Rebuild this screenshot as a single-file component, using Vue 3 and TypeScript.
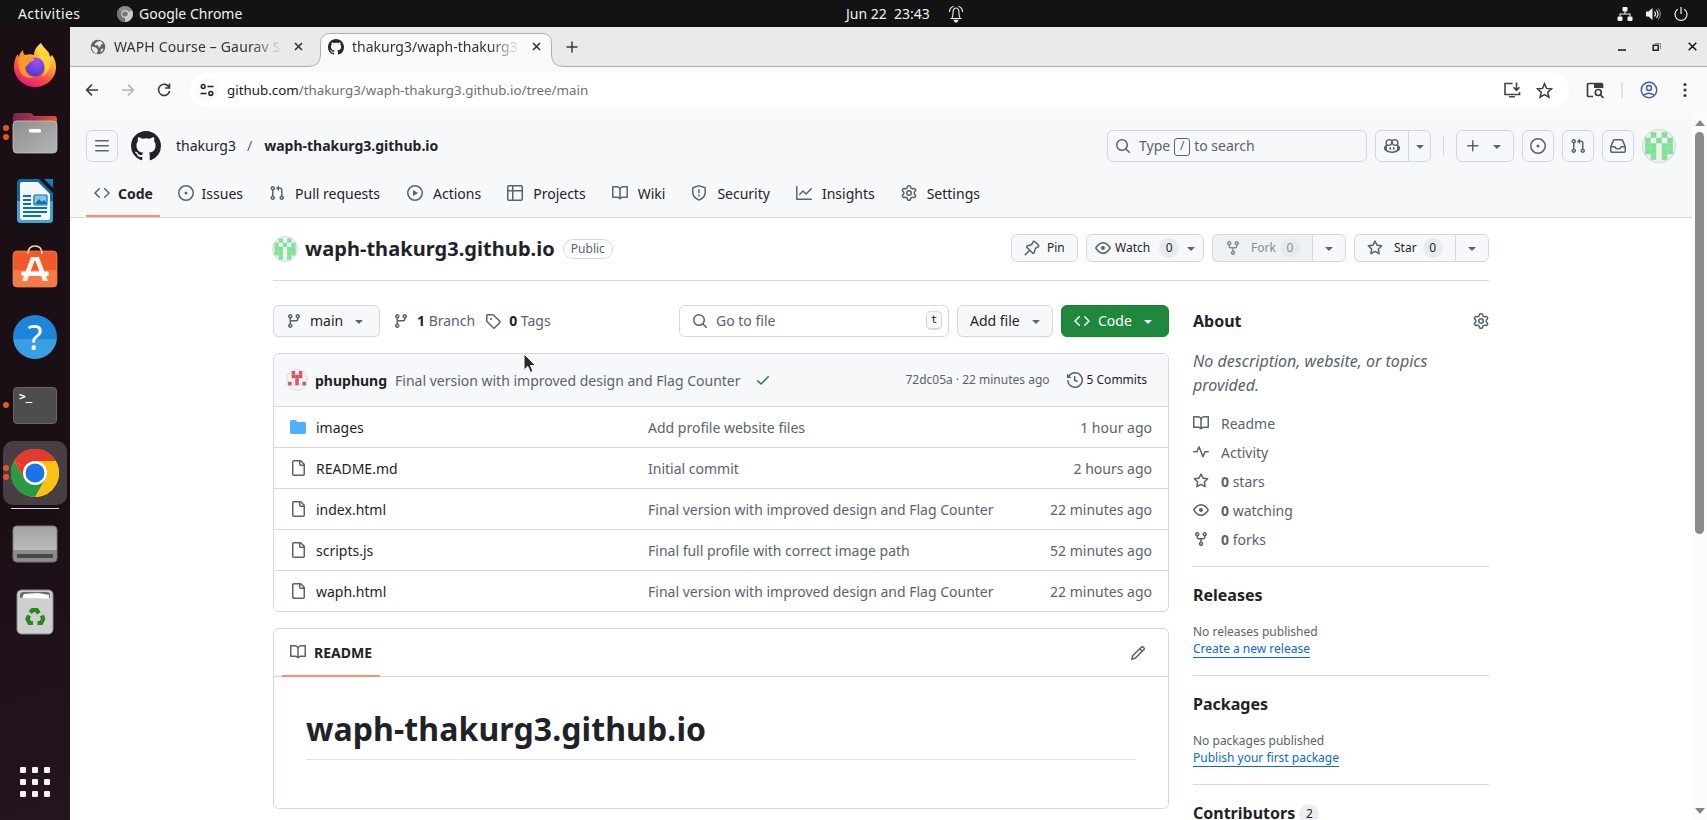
<script setup lang="ts">
import { h } from 'vue'

const paths: Record<string, string> = {
  code: 'm11.28 3.22 4.25 4.25a.75.75 0 0 1 0 1.06l-4.25 4.25a.749.749 0 0 1-1.275-.326.749.749 0 0 1 .215-.734L13.94 8l-3.72-3.72a.749.749 0 0 1 .326-1.275.749.749 0 0 1 .734.215Zm-6.56 0a.751.751 0 0 1 1.042.018.751.751 0 0 1 .018 1.042L2.06 8l3.72 3.72a.749.749 0 0 1-.326 1.275.749.749 0 0 1-.734-.215L.47 8.53a.75.75 0 0 1 0-1.06Z',
  issue: 'M8 9.5a1.5 1.5 0 1 0 0-3 1.5 1.5 0 0 0 0 3Z M8 0a8 8 0 1 1 0 16A8 8 0 0 1 8 0ZM1.5 8a6.5 6.5 0 1 0 13 0 6.5 6.5 0 0 0-13 0Z',
  pull: 'M1.5 3.25a2.25 2.25 0 1 1 3 2.122v5.256a2.251 2.251 0 1 1-1.5 0V5.372A2.25 2.25 0 0 1 1.5 3.25Zm5.677-.177L9.573.677A.25.25 0 0 1 10 .854V2.5h1A2.5 2.5 0 0 1 13.5 5v5.628a2.251 2.251 0 1 1-1.5 0V5a1 1 0 0 0-1-1h-1v1.646a.25.25 0 0 1-.427.177L7.177 3.427a.25.25 0 0 1 0-.354ZM3.75 2.5a.75.75 0 1 0 0 1.5.75.75 0 0 0 0-1.5Zm0 9.5a.75.75 0 1 0 0 1.5.75.75 0 0 0 0-1.5Zm8.25.75a.75.75 0 1 0 1.5 0 .75.75 0 0 0-1.5 0Z',
  play: 'M8 0a8 8 0 1 1 0 16A8 8 0 0 1 8 0ZM1.5 8a6.5 6.5 0 1 0 13 0 6.5 6.5 0 0 0-13 0Zm4.879-2.773 4.264 2.559a.25.25 0 0 1 0 .428l-4.264 2.559A.25.25 0 0 1 6 10.559V5.442a.25.25 0 0 1 .379-.215Z',
  table: 'M0 1.75C0 .784.784 0 1.75 0h12.5C15.216 0 16 .784 16 1.75v12.5A1.75 1.75 0 0 1 14.25 16H1.75A1.75 1.75 0 0 1 0 14.25ZM6.5 6.5v8h7.75a.25.25 0 0 0 .25-.25V6.5Zm8-1.5V1.75a.25.25 0 0 0-.25-.25H6.5V5Zm-13 1.5v7.75c0 .138.112.25.25.25H5v-8ZM5 5V1.5H1.75a.25.25 0 0 0-.25.25V5Z',
  book: 'M0 1.75A.75.75 0 0 1 .75 1h4.253c1.227 0 2.317.59 3 1.501A3.743 3.743 0 0 1 11.006 1h4.245a.75.75 0 0 1 .75.75v10.5a.75.75 0 0 1-.75.75h-4.507a2.25 2.25 0 0 0-1.591.659l-.622.621a.75.75 0 0 1-1.06 0l-.622-.621A2.25 2.25 0 0 0 5.258 13H.75a.75.75 0 0 1-.75-.75Zm7.251 10.324.004-5.073-.002-2.253A2.25 2.25 0 0 0 5.003 2.5H1.5v9h3.757a3.75 3.75 0 0 1 1.994.574ZM8.755 4.75l-.004 7.322a3.752 3.752 0 0 1 1.992-.572H14.5v-9h-3.495a2.25 2.25 0 0 0-2.25 2.25Z',
  shield: 'M7.467.133a1.748 1.748 0 0 1 1.066 0l5.25 1.68A1.75 1.75 0 0 1 15 3.48V7c0 1.566-.32 3.182-1.303 4.682-.983 1.498-2.585 2.813-5.032 3.855a1.697 1.697 0 0 1-1.33 0c-2.447-1.042-4.049-2.357-5.032-3.855C1.32 10.182 1 8.566 1 7V3.48a1.75 1.75 0 0 1 1.217-1.667Zm.61 1.429a.25.25 0 0 0-.153 0l-5.25 1.68a.25.25 0 0 0-.174.238V7c0 1.358.275 2.666 1.057 3.86.784 1.194 2.121 2.34 4.366 3.297a.196.196 0 0 0 .154 0c2.245-.956 3.582-2.104 4.366-3.298C13.225 9.666 13.5 8.36 13.5 7V3.48a.251.251 0 0 0-.174-.237l-5.25-1.68ZM8.75 4.75v3a.75.75 0 0 1-1.5 0v-3a.75.75 0 0 1 1.5 0ZM9 10.5a1 1 0 1 1-2 0 1 1 0 0 1 2 0Z',
  graph: 'M1.5 1.75V13.5h13.75a.75.75 0 0 1 0 1.5H.75a.75.75 0 0 1-.75-.75V1.75a.75.75 0 0 1 1.5 0Zm14.28 2.53-5.25 5.25a.75.75 0 0 1-1.06 0L7 7.06 4.28 9.78a.751.751 0 0 1-1.042-.018.751.751 0 0 1-.018-1.042l3.25-3.25a.75.75 0 0 1 1.06 0L10 7.94l4.72-4.72a.751.751 0 0 1 1.042.018.751.751 0 0 1 .018 1.042Z',
  gear: 'M8 0a8.2 8.2 0 0 1 .701.031C9.444.095 9.99.645 10.16 1.29l.288 1.107c.018.066.079.158.212.224.231.114.454.243.668.386.123.082.233.09.299.071l1.103-.303c.644-.176 1.392.021 1.82.63.27.385.506.792.704 1.218.315.675.111 1.422-.364 1.891l-.814.806c-.049.048-.098.147-.088.294.016.257.016.515 0 .772-.01.147.038.246.088.294l.814.806c.475.469.679 1.216.364 1.891a7.977 7.977 0 0 1-.704 1.217c-.428.61-1.176.807-1.82.63l-1.102-.302c-.067-.019-.177-.011-.3.071a5.909 5.909 0 0 1-.668.386c-.133.066-.194.158-.211.224l-.29 1.106c-.168.646-.715 1.196-1.458 1.26a8.006 8.006 0 0 1-1.402 0c-.743-.064-1.289-.614-1.458-1.26l-.289-1.106c-.018-.066-.079-.158-.212-.224a5.738 5.738 0 0 1-.668-.386c-.123-.082-.233-.09-.299-.071l-1.103.303c-.644.176-1.392-.021-1.82-.63a8.12 8.12 0 0 1-.704-1.218c-.315-.675-.111-1.422.363-1.891l.815-.806c.05-.048.098-.147.088-.294a6.214 6.214 0 0 1 0-.772c.01-.147-.038-.246-.088-.294l-.815-.806C.635 6.045.431 5.298.746 4.623a7.92 7.92 0 0 1 .704-1.217c.428-.61 1.176-.807 1.82-.63l1.102.302c.067.019.177.011.3-.071.214-.143.437-.272.668-.386.133-.066.194-.158.211-.224l.29-1.106C6.009.645 6.556.095 7.299.03 7.53.01 7.764 0 8 0Zm-.571 1.525c-.036.003-.108.036-.137.146l-.289 1.105c-.147.561-.549.967-.998 1.189-.173.086-.34.183-.5.29-.417.278-.97.423-1.529.27l-1.103-.303c-.109-.03-.175.016-.195.045-.22.312-.412.644-.573.99-.014.031-.021.11.059.19l.815.806c.411.406.562.957.53 1.456a4.709 4.709 0 0 0 0 .582c.032.499-.119 1.05-.53 1.456l-.815.806c-.081.08-.073.159-.059.19.162.346.353.677.573.989.02.03.085.076.195.046l1.102-.303c.56-.153 1.113-.008 1.53.27.161.107.328.204.501.29.447.222.85.629.997 1.189l.289 1.105c.029.109.101.143.137.146a6.6 6.6 0 0 0 1.142 0c.036-.003.108-.036.137-.146l.289-1.105c.147-.561.549-.967.998-1.189.173-.086.34-.183.5-.29.417-.278.97-.423 1.529-.27l1.103.303c.109.029.175-.016.195-.045.22-.313.411-.644.573-.99.014-.031.021-.11-.059-.19l-.815-.806c-.411-.406-.562-.957-.53-1.456a4.709 4.709 0 0 0 0-.582c-.032-.499.119-1.05.53-1.456l.815-.806c.081-.08.073-.159.059-.19a6.464 6.464 0 0 0-.573-.989c-.02-.03-.085-.076-.195-.046l-1.102.303c-.56.153-1.113.008-1.53-.27a4.44 4.44 0 0 0-.501-.29c-.447-.222-.85-.629-.997-1.189l-.289-1.105c-.029-.11-.101-.143-.137-.146a6.6 6.6 0 0 0-1.142 0ZM11 8a3 3 0 1 1-6 0 3 3 0 0 1 6 0ZM9.5 8a1.5 1.5 0 1 0-3.001.001A1.5 1.5 0 0 0 9.5 8Z',
  github: 'M8 0c4.42 0 8 3.58 8 8a8.013 8.013 0 0 1-5.45 7.59c-.4.08-.55-.17-.55-.38 0-.27.01-1.13.01-2.2 0-.75-.25-1.23-.54-1.48 1.78-.2 3.65-.88 3.65-3.95 0-.88-.31-1.59-.82-2.15.08-.2.36-1.02-.08-2.12 0 0-.67-.22-2.2.82-.64-.18-1.32-.27-2-.27-.68 0-1.36.09-2 .27-1.53-1.03-2.2-.82-2.2-.82-.44 1.1-.16 1.92-.08 2.12-.51.56-.82 1.28-.82 2.15 0 3.06 1.86 3.75 3.64 3.95-.23.2-.44.55-.51 1.07-.46.21-1.61.55-2.33-.66-.15-.24-.6-.83-1.23-.82-.67.01-.27.38.01.53.34.19.73.9.82 1.13.16.45.68 1.31 2.69.94 0 .67.01 1.3.01 1.49 0 .21-.15.45-.55.38A7.995 7.995 0 0 1 0 8c0-4.42 3.58-8 8-8Z',
  search: 'M10.68 11.74a6 6 0 0 1-7.922-8.982 6 6 0 0 1 8.982 7.922l3.04 3.04a.749.749 0 0 1-.326 1.275.749.749 0 0 1-.734-.215ZM11.5 7a4.499 4.499 0 1 0-8.997 0A4.499 4.499 0 0 0 11.5 7Z',
  bars: 'M1 2.75A.75.75 0 0 1 1.75 2h12.5a.75.75 0 0 1 0 1.5H1.75A.75.75 0 0 1 1 2.75Zm0 5A.75.75 0 0 1 1.75 7h12.5a.75.75 0 0 1 0 1.5H1.75A.75.75 0 0 1 1 7.75ZM1.75 12h12.5a.75.75 0 0 1 0 1.5H1.75a.75.75 0 0 1 0-1.5Z',
  down: 'm4.427 7.427 3.396 3.396a.25.25 0 0 0 .354 0l3.396-3.396A.25.25 0 0 0 11.396 7H4.604a.25.25 0 0 0-.177.427Z',
  plus: 'M7.75 2a.75.75 0 0 1 .75.75V7h4.25a.75.75 0 0 1 0 1.5H8.5v4.25a.75.75 0 0 1-1.5 0V8.5H2.75a.75.75 0 0 1 0-1.5H7V2.75A.75.75 0 0 1 7.75 2Z',
  inbox: 'M2.8 2.06A1.75 1.75 0 0 1 4.41 1h7.18c.7 0 1.333.417 1.61 1.06l2.74 6.395c.04.093.06.194.06.295v4.5A1.75 1.75 0 0 1 14.25 15H1.75A1.75 1.75 0 0 1 0 13.25v-4.5c0-.101.02-.202.06-.295Zm1.61.44a.25.25 0 0 0-.23.152L1.887 8H4.75a.75.75 0 0 1 .6.3L6.625 10h2.75l1.275-1.7a.75.75 0 0 1 .6-.3h2.863L11.82 2.652a.25.25 0 0 0-.23-.152Zm10.09 7h-2.875l-1.275 1.7a.75.75 0 0 1-.6.3h-3.5a.75.75 0 0 1-.6-.3L4.375 9.5H1.5v3.75c0 .138.112.25.25.25h12.5a.25.25 0 0 0 .25-.25Z',
  copilot: 'M7.998 15.035c-4.562 0-7.873-2.914-7.998-3.749V9.338c.085-.628.677-1.686 1.588-2.065.013-.07.024-.143.036-.218.029-.183.06-.384.126-.612-.201-.508-.254-1.084-.254-1.656 0-.87.128-1.769.693-2.484.579-.733 1.494-1.124 2.724-1.261 1.206-.134 2.262.034 2.944.765.05.053.096.108.139.165.044-.057.094-.112.143-.165.682-.731 1.738-.899 2.944-.765 1.23.137 2.145.528 2.724 1.261.566.715.693 1.614.693 2.484 0 .572-.053 1.148-.254 1.656.066.228.098.429.126.612.012.076.024.148.037.218.924.385 1.522 1.471 1.591 2.095v1.872c0 .766-3.351 3.795-8.002 3.795Zm0-1.485c2.28 0 4.584-1.11 5.002-1.433V7.862l-.023-.116c-.49.21-1.075.291-1.727.291-1.146 0-2.059-.327-2.71-.991A3.222 3.222 0 0 1 8 6.303a3.24 3.24 0 0 1-.544.743c-.65.664-1.563.991-2.71.991-.652 0-1.236-.081-1.727-.291l-.023.116v4.255c.419.323 2.722 1.433 5.002 1.433ZM6.762 2.83c-.193-.206-.637-.413-1.682-.297-1.019.113-1.479.404-1.713.7-.247.312-.369.789-.369 1.554 0 .793.129 1.171.308 1.371.162.181.519.379 1.442.379.853 0 1.339-.235 1.638-.54.315-.322.527-.827.617-1.553.117-.935-.037-1.395-.241-1.614Zm4.155-.297c-1.044-.116-1.488.091-1.681.297-.204.219-.359.679-.242 1.614.091.726.303 1.231.618 1.553.299.305.784.54 1.638.54.922 0 1.28-.198 1.442-.379.179-.2.308-.578.308-1.371 0-.765-.123-1.242-.37-1.554-.233-.296-.693-.587-1.713-.7Z M6.25 9.037a.75.75 0 0 1 .75.75v1.501a.75.75 0 0 1-1.5 0V9.787a.75.75 0 0 1 .75-.75Zm4.25.75v1.501a.75.75 0 0 1-1.5 0V9.787a.75.75 0 0 1 1.5 0Z',
  pin: 'm11.294.984 3.722 3.722a1.75 1.75 0 0 1-.504 2.826l-1.327.613a3.089 3.089 0 0 0-1.707 2.084l-.584 2.454c-.317 1.332-1.972 1.8-2.94.832L5.75 11.311 1.78 15.28a.749.749 0 1 1-1.06-1.06l3.969-3.97-2.204-2.204c-.968-.968-.5-2.623.832-2.94l2.454-.584a3.08 3.08 0 0 0 2.084-1.707l.613-1.327a1.75 1.75 0 0 1 2.826-.504ZM6.283 9.723l2.732 2.731a.25.25 0 0 0 .42-.119l.584-2.454a4.586 4.586 0 0 1 2.537-3.098l1.328-.613a.25.25 0 0 0 .072-.404l-3.722-3.722a.25.25 0 0 0-.404.072l-.613 1.328a4.584 4.584 0 0 1-3.098 2.537l-2.454.584a.25.25 0 0 0-.119.42l2.731 2.732Z',
  eye: 'M8 2c1.981 0 3.671.992 4.933 2.078 1.27 1.091 2.187 2.345 2.637 3.023a1.62 1.62 0 0 1 0 1.798c-.45.678-1.367 1.932-2.637 3.023C11.67 13.008 9.981 14 8 14c-1.981 0-3.671-.992-4.933-2.078C1.797 10.83.88 9.576.43 8.898a1.62 1.62 0 0 1 0-1.798c.45-.677 1.367-1.931 2.637-3.022C4.33 2.992 6.019 2 8 2ZM1.679 7.932a.12.12 0 0 0 0 .136c.411.622 1.241 1.75 2.366 2.717C5.176 11.758 6.527 12.5 8 12.5c1.473 0 2.825-.742 3.955-1.715 1.124-.967 1.954-2.096 2.366-2.717a.12.12 0 0 0 0-.136c-.412-.621-1.242-1.75-2.366-2.717C10.824 4.242 9.473 3.5 8 3.5c-1.473 0-2.825.742-3.955 1.715-1.124.967-1.954 2.096-2.366 2.717ZM8 10a2 2 0 1 1-.001-3.999A2 2 0 0 1 8 10Z',
  fork: 'M5 5.372v.878c0 .414.336.75.75.75h4.5a.75.75 0 0 0 .75-.75v-.878a2.25 2.25 0 1 1 1.5 0v.878a2.25 2.25 0 0 1-2.25 2.25h-1.5v2.128a2.251 2.251 0 1 1-1.5 0V8.5h-1.5A2.25 2.25 0 0 1 3.5 6.25v-.878a2.25 2.25 0 1 1 1.5 0ZM5 3.25a.75.75 0 1 0-1.5 0 .75.75 0 0 0 1.5 0Zm6.75.75a.75.75 0 1 0 0-1.5.75.75 0 0 0 0 1.5Zm-3 8.75a.75.75 0 1 0-1.5 0 .75.75 0 0 0 1.5 0Z',
  star: 'M8 .25a.75.75 0 0 1 .673.418l1.882 3.815 4.21.612a.75.75 0 0 1 .416 1.279l-3.046 2.97.719 4.192a.751.751 0 0 1-1.088.791L8 12.347l-3.766 1.98a.75.75 0 0 1-1.088-.79l.72-4.194L.818 6.374a.75.75 0 0 1 .416-1.28l4.21-.611L7.327.668A.75.75 0 0 1 8 .25Zm0 2.445L6.615 5.5a.75.75 0 0 1-.564.41l-3.097.45 2.24 2.184a.75.75 0 0 1 .216.664l-.528 3.084 2.769-1.456a.75.75 0 0 1 .698 0l2.77 1.456-.53-3.084a.75.75 0 0 1 .216-.664l2.24-2.183-3.096-.45a.75.75 0 0 1-.564-.41L8 2.694Z',
  branch: 'M9.5 3.25a2.25 2.25 0 1 1 3 2.122V6A2.5 2.5 0 0 1 10 8.5H6a1 1 0 0 0-1 1v1.128a2.251 2.251 0 1 1-1.5 0V5.372a2.25 2.25 0 1 1 1.5 0v1.836A2.493 2.493 0 0 1 6 7h4a1 1 0 0 0 1-1v-.628A2.25 2.25 0 0 1 9.5 3.25Zm-6 0a.75.75 0 1 0 1.5 0 .75.75 0 0 0-1.5 0Zm8.25-.75a.75.75 0 1 0 0 1.5.75.75 0 0 0 0-1.5ZM4.25 12a.75.75 0 1 0 0 1.5.75.75 0 0 0 0-1.5Z',
  tag: 'M1 7.775V2.75C1 1.784 1.784 1 2.75 1h5.025c.464 0 .91.184 1.238.513l6.25 6.25a1.75 1.75 0 0 1 0 2.474l-5.026 5.026a1.75 1.75 0 0 1-2.474 0l-6.25-6.25A1.752 1.752 0 0 1 1 7.775Zm1.5 0c0 .066.026.13.073.177l6.25 6.25a.25.25 0 0 0 .354 0l5.025-5.025a.25.25 0 0 0 0-.354l-6.25-6.25a.25.25 0 0 0-.177-.073H2.75a.25.25 0 0 0-.25.25ZM6 5a1 1 0 1 1 0 2 1 1 0 0 1 0-2Z',
  check: 'M13.78 4.22a.75.75 0 0 1 0 1.06l-7.25 7.25a.75.75 0 0 1-1.06 0L2.22 9.28a.751.751 0 0 1 .018-1.042.751.751 0 0 1 1.042-.018L6 10.94l6.72-6.72a.75.75 0 0 1 1.06 0Z',
  history: 'm.427 1.927 1.215 1.215a8.002 8.002 0 1 1-1.6 5.685.75.75 0 1 1 1.493-.154 6.5 6.5 0 1 0 1.18-4.458l1.358 1.358A.25.25 0 0 1 3.896 6H.25A.25.25 0 0 1 0 5.75V2.104a.25.25 0 0 1 .427-.177ZM7.75 4a.75.75 0 0 1 .75.75v2.992l2.028.812a.75.75 0 0 1-.557 1.392l-2.5-1A.751.751 0 0 1 7 8.25v-3.5A.75.75 0 0 1 7.75 4Z',
  folder: 'M1.75 1A1.75 1.75 0 0 0 0 2.75v10.5C0 14.216.784 15 1.75 15h12.5A1.75 1.75 0 0 0 16 13.25v-8.5A1.75 1.75 0 0 0 14.25 3H7.5a.25.25 0 0 1-.2-.1l-.9-1.2C6.07 1.26 5.55 1 5 1H1.75Z',
  file: 'M2 1.75C2 .784 2.784 0 3.75 0h6.586c.464 0 .909.184 1.237.513l2.914 2.914c.329.328.513.773.513 1.237v9.586A1.75 1.75 0 0 1 13.25 16h-9.5A1.75 1.75 0 0 1 2 14.25Zm1.75-.25a.25.25 0 0 0-.25.25v12.5c0 .138.112.25.25.25h9.5a.25.25 0 0 0 .25-.25V6h-2.75A1.75 1.75 0 0 1 9 4.25V1.5Zm6.75.062V4.25c0 .138.112.25.25.25h2.688l-.011-.013-2.914-2.914-.013-.011Z',
  pencil: 'M11.013 1.427a1.75 1.75 0 0 1 2.474 0l1.086 1.086a1.75 1.75 0 0 1 0 2.474l-8.61 8.61c-.21.21-.47.364-.756.445l-3.251.93a.75.75 0 0 1-.927-.928l.929-3.25c.081-.286.235-.547.445-.758l8.61-8.61Zm.176 4.823L9.75 4.81l-6.286 6.287a.253.253 0 0 0-.064.108l-.558 1.953 1.953-.558a.253.253 0 0 0 .108-.064Zm1.238-3.763a.25.25 0 0 0-.354 0L10.811 3.75l1.439 1.44 1.263-1.263a.25.25 0 0 0 0-.354Z',
  pulse: 'M6 2c.306 0 .582.187.696.471L10 10.731l1.304-3.26A.751.751 0 0 1 12 7h3.25a.75.75 0 0 1 0 1.5h-2.742l-1.812 4.528a.751.751 0 0 1-1.392 0L6 4.77 4.696 8.03A.75.75 0 0 1 4 8.5H.75a.75.75 0 0 1 0-1.5h2.742l1.812-4.529A.751.751 0 0 1 6 2Z',
}

const Icon = (p: { name: string; size?: number }) =>
  h('svg', { viewBox: '0 0 16 16', width: p.size ?? 16, height: p.size ?? 16, fill: 'currentColor', class: 'icon' }, [
    h('path', { d: paths[p.name], 'fill-rule': 'evenodd' }),
  ])
Icon.props = ['name', 'size']

const patterns: Record<string, string[]> = {
  green: ['01010', '10101', '11011', '11011', '01010'],
  red: ['01010', '01110', '00100', '10101', '00000'],
}
const Identicon = (p: { kind: string; color: string; size: number }) =>
  h('svg', { viewBox: '0 0 32 32', width: p.size, height: p.size, class: 'identicon' }, [
    h('circle', { cx: 16, cy: 16, r: 15.5, fill: '#f0f0f0', stroke: '#d5d8db' }),
    ...patterns[p.kind].flatMap((row, y) =>
      [...row].map((c, x) =>
        c === '1'
          ? h('rect', { x: 3 + x * 5.2, y: 3 + y * 5.2, width: 5.25, height: 5.25, fill: p.color })
          : null,
      ),
    ),
  ])
Identicon.props = ['kind', 'color', 'size']

const nav = [
  { icon: 'code', label: 'Code', active: true },
  { icon: 'issue', label: 'Issues' },
  { icon: 'pull', label: 'Pull requests' },
  { icon: 'play', label: 'Actions' },
  { icon: 'table', label: 'Projects' },
  { icon: 'book', label: 'Wiki' },
  { icon: 'shield', label: 'Security' },
  { icon: 'graph', label: 'Insights' },
  { icon: 'gear', label: 'Settings' },
]
const files = [
  { icon: 'folder', name: 'images', msg: 'Add profile website files', date: '1 hour ago' },
  { icon: 'file', name: 'README.md', msg: 'Initial commit', date: '2 hours ago' },
  { icon: 'file', name: 'index.html', msg: 'Final version with improved design and Flag Counter', date: '22 minutes ago' },
  { icon: 'file', name: 'scripts.js', msg: 'Final full profile with correct image path', date: '52 minutes ago' },
  { icon: 'file', name: 'waph.html', msg: 'Final version with improved design and Flag Counter', date: '22 minutes ago' },
]
const facts = [
  { icon: 'book', count: '', label: 'Readme' },
  { icon: 'pulse', count: '', label: 'Activity' },
  { icon: 'star', count: '0', label: ' stars' },
  { icon: 'eye', count: '0', label: ' watching' },
  { icon: 'fork', count: '0', label: ' forks' },
]
</script>

<template>
  <div class="desktop">
    <header class="topbar">
      <span class="activities">Activities</span>
      <svg class="app-ico" width="16" height="16" viewBox="0 0 16 16">
        <circle cx="8" cy="8" r="8" fill="#8d8d8d" />
        <path d="M8 8 15 4.2A8 8 0 0 1 8 16Z" fill="#c9c9c9" />
        <path d="M8 8 1.2 3.8A8 8 0 0 0 8 16Z" fill="#747474" />
        <circle cx="8" cy="8" r="3.7" fill="#e8e8e8" /><circle cx="8" cy="8" r="2.8" fill="#777" />
      </svg>
      <span class="app-name">Google Chrome</span>
      <span class="clock">Jun 22&nbsp; 23:43</span>
      <svg class="bell" width="16" height="18" viewBox="0 0 16 18" fill="none" stroke="#eee" stroke-width="1.1">
        <path d="M2.5 13.5h11M4 13c1-1.500 1-3 1-5 0-3 1-5 3-5s3 2 3 5c0 2 0 3.500 1 5M5.600 1.200C3 2 1.500 4 1.300 7M10.400 1.200C13 2 14.500 4 14.700 7" />
        <path d="M6.300 15.300h3.400L8.800 17H7.200Z" fill="#eee" />
      </svg>
      <div class="tray">
        <svg width="16" height="16" viewBox="0 0 16 16"><g fill="#f2f2f2"><rect x="5.500" y="1" width="5" height="4.500" rx="1" /><rect x="0.500" y="10.500" width="5" height="4.500" rx="1" /><rect x="10.500" y="10.500" width="5" height="4.500" rx="1" /><path d="M7.500 5h1v2.500h5v3h-1v-2h-9v2h-1v-3h5Z" /></g></svg>
        <svg width="16" height="16" viewBox="0 0 16 16"><path d="M1 5.500h2.500L7.500 2v12L3.500 10.500H1Z" fill="#f2f2f2" /><path d="M9.500 5.500q2 2.500 0 5M11.500 4q3 4 0 8" fill="none" stroke="#f2f2f2" stroke-width="1.200" /><path d="M13.300 2.500q4 5.500 0 11" fill="none" stroke="#999" /></svg>
        <svg width="16" height="16" viewBox="0 0 16 16" fill="none" stroke="#f2f2f2" stroke-width="1.200"><path d="M8 1v7M4.800 3.300a6 6 0 1 0 6.400 0" /></svg>
      </div>
    </header>

    <div class="body">
      <aside class="dock">
        <div class="app">
          <svg width="44" height="44" viewBox="0 0 44 44">
            <defs>
              <linearGradient id="ff" x1="0.8" y1="0" x2="0.3" y2="1"><stop offset="0" stop-color="#fff44f" /><stop offset=".4" stop-color="#ffa330" /><stop offset=".7" stop-color="#ff4a45" /><stop offset="1" stop-color="#e31587" /></linearGradient>
              <radialGradient id="fp" cx=".6" cy=".2" r=".8"><stop offset="0" stop-color="#a14cf0" /><stop offset="1" stop-color="#4b3fd0" /></radialGradient>
            </defs>
            <path d="M28 0c1 3 5 6 8 10l1 4 2-2c3 4 4 8 4 12 0 12-10 20-21 20S1 35 1 24c0-6 2-11 4-13 0 1 0 2 1 3 0-3 2-5 4-7 0 3 1 5 3 5 3-1 5-1 8 0 0-5 3-9 7-12Z" fill="url(#ff)" />
            <circle cx="22" cy="24" r="9.500" fill="url(#fp)" />
            <path d="M6 15c4-2 9-3 13-1l3 3c-1 1-5 1-6 3-1 3-4 3-4 5 1 6 5 9 10 9-8 3-14-2-16-8-1-4-1-8 0-11Z" fill="#ff9a2a" />
            <path d="M28 0c1 3 5 6 7 10 5 10 2 19-6 24 5-8 3-14 0-17-4-4-8-9-1-17Z" fill="#ffd93a" opacity=".85" />
          </svg>
        </div>
        <div class="app">
          <i class="dot one" /><i class="dot two" />
          <svg width="46" height="42" viewBox="0 0 46 42">
            <defs><linearGradient id="fl"><stop offset="0" stop-color="#77264f" /><stop offset=".5" stop-color="#a8344a" /><stop offset="1" stop-color="#e95420" /></linearGradient><linearGradient id="fg" x2="1" y2="1"><stop offset="0" stop-color="#8e8e8e" /><stop offset="1" stop-color="#b5b5b5" /></linearGradient></defs>
            <path d="M1 12V4q0-3 3-3h14q2 0 4 3h20q3 0 3 3v6Z" fill="url(#fl)" />
            <rect x="1" y="9" width="44" height="32" rx="4" fill="url(#fg)" stroke="#c4c4c4" stroke-width=".8" />
            <rect x="17" y="17" width="12" height="3.400" rx="1.200" fill="#fff" />
          </svg>
        </div>
        <div class="app">
          <svg width="36" height="44" viewBox="0 0 36 44">
            <path d="M4 0h18l14 14v26q0 4-4 4H4q-4 0-4-4V4q0-4 4-4Z" fill="#0f6a9e" />
            <path d="M0 22h36v18q0 4-4 4H4q-4 0-4-4Z" fill="#43a3d2" /><path d="M27 0h9v9Z" fill="#0c7fb5" />
            <path d="M5 3h16l12 12v24q0 2-2 2H5q-2 0-2-2V5q0-2 2-2Z" fill="#f3f7fa" />
            <path d="M6 16h8v2H6zM6 20h8v2H6zM6 24h8v2H6zM6 28h24v2H6zM6 32h24v2H6zM6 36h18v2H6z" fill="#0c72ad" />
            <rect x="17" y="16" width="13" height="10" rx="1" fill="#86c5e6" stroke="#0c72ad" stroke-width="1.200" /><path d="m18 25 4-5 3 3 2-2 2 2v2Z" fill="#0c72ad" />
          </svg>
        </div>
        <div class="app">
          <svg class="lift" width="46" height="43" viewBox="0 0 46 43">
            <rect x="1" y="6" width="44" height="36" rx="4" fill="#f0592a" stroke="#f58a5e" stroke-width=".7" /><path d="M1 25h44v13q0 4-4 4H5q-4 0-4-4Z" fill="#f47a48" />
            <path d="M16 9q0-8 7-8t7 8" fill="none" stroke="#f7d9b5" stroke-width="1.600" />
            <path d="M10 36 19 12h8l9 24h-5L23.500 16h-1L15 36Z" fill="#fff3ec" /><rect x="9" y="26.500" width="28" height="4.500" rx="2.200" fill="#fff" />
          </svg>
        </div>
        <div class="app">
          <div class="help">?</div>
        </div>
        <div class="app">
          <i class="dot mid" />
          <div class="terminal">&gt;_</div>
        </div>
        <div class="app current">
          <i class="dot one" /><i class="dot two" />
          <svg width="48" height="48" viewBox="0 0 48 48">
            <circle cx="24" cy="24" r="24" fill="#fbc116" />
            <path d="M24 24 3.200 12A24 24 0 0 1 44.800 12Z" fill="#e33b2e" />
            <path d="M3.200 12A24 24 0 0 0 24 48L34.400 30 24 24 13.600 30Z" fill="#2b9a47" />
            <path d="M3.200 12 13.600 30 24 12ZM3.200 12 24 12 24 24Z" fill="#e33b2e" />
            <path d="M24 12h20.800A24 24 0 0 1 24 48l10.400-18Z" fill="#fbc116" />
            <circle cx="24" cy="24" r="12" fill="#fff" /><circle cx="24" cy="24" r="9.500" fill="#1a73e8" />
          </svg>
        </div>
        <div class="sep" />
        <div class="app">
          <svg width="46" height="38" viewBox="0 0 46 38"><defs><linearGradient id="dr" x2="0" y2="1"><stop offset="0" stop-color="#a2a2a2" /><stop offset="1" stop-color="#bcbcbc" /></linearGradient></defs><rect x="1" y="1" width="44" height="36" rx="4" fill="#8c8c8c" stroke="#777" /><path d="M1.500 25V5q0-3.500 3.500-3.500h36q3.500 0 3.500 3.500v20Z" fill="url(#dr)" /><rect x="5" y="29" width="36" height="4" fill="#484848" /></svg>
        </div>
        <div class="app">
          <svg width="38" height="46" viewBox="0 0 38 46">
            <rect x="1" y="1" width="36" height="44" rx="4.500" fill="#cfcfcf" stroke="#8a8a8a" />
            <path d="M4 9V6q0-3 3-3h24q3 0 3 3v3Z" fill="#6d6d6d" /><path d="m6 9 2-4 14-1 11 2 0 3.500Z" fill="#fff" />
            <g fill="none" stroke="#26881f" stroke-width="4.200"><path d="m14.200 23.500 2.200-2.400h4.400l2 3.200M25.800 26.500l1.400 3.500-2 4h-3.700M17 34h-3.500l-2-4 1.600-3.600" /></g>
          </svg>
        </div>
        <div class="grid9"><i v-for="n in 9" :key="n" /></div>
      </aside>

      <section class="browser">
        <div class="tabs">
          <div class="tab">
            <svg width="16" height="16" viewBox="0 0 16 16"><circle cx="8" cy="8" r="7.300" fill="#5f6368" /><path d="M8 2.200 10.500 2 13 4.500l-2 1.500-1 2.500L8.500 8 8 6 5.500 6.500 4.500 5ZM1.500 7.500l3 .5L7 9.500l1 2L6.500 15Q2 13 1.500 7.500ZM11 10l2.500-.5-1.500 3.500-1.500-1Z" fill="#e9e9e9" /></svg>
            <span class="tab-title wide">WAPH Course – Gaurav S</span>
            <svg class="x" width="9" height="9" viewBox="0 0 9 9"><path d="m1 1 7 7M8 1 1 8" stroke="#333" stroke-width="1.600" /></svg>
          </div>
          <div class="tab active">
            <svg class="shape" width="256" height="35" viewBox="0 0 256 35"><path d="M0 33.500Q12.500 33.500 12.500 22V10Q12.500 .5 22.500 .5H234Q243.500 .5 243.500 10V22Q243.500 33.500 256 33.500V35H0Z" fill="#fafafa" /><path d="M0 33.500Q12.500 33.500 12.500 22V10Q12.500 .5 22.500 .5H234Q243.500 .5 243.500 10V22Q243.500 33.500 256 33.500" fill="none" stroke="#b0b0b0" /></svg>
            <Icon name="github" class="gh" />
            <span class="tab-title">thakurg3/waph-thakurg3</span>
            <svg class="x" width="9" height="9" viewBox="0 0 9 9"><path d="m1 1 7 7M8 1 1 8" stroke="#333" stroke-width="1.600" /></svg>
          </div>
          <svg class="new" width="12" height="12" viewBox="0 0 12 12"><path d="M6 .5v11M.5 6h11" stroke="#3a3a3a" stroke-width="1.500" /></svg>
          <div class="win">
            <svg width="8" height="12" viewBox="0 0 8 12"><path d="M0 9h8" stroke="#111" stroke-width="1.500" /></svg>
            <svg width="10" height="10" viewBox="0 0 10 10" fill="none"><path d="M3 1.500h5.500V7" stroke="#888" /><rect x="1.200" y="3.200" width="5" height="5" stroke="#111" stroke-width="1.400" /></svg>
            <svg width="9" height="9" viewBox="0 0 9 9"><path d="m.7.700 7.600 7.600M8.300.700.700 8.300" stroke="#111" stroke-width="1.500" /></svg>
          </div>
        </div>

        <div class="toolbar">
          <svg class="nav-ico" width="16" height="16" viewBox="0 0 16 16" fill="none" stroke="#3c3c3c" stroke-width="1.600"><path d="M14 8H3M8 2.600 2.600 8 8 13.400" /></svg>
          <svg class="nav-ico" width="16" height="16" viewBox="0 0 16 16" fill="none" stroke="#b3b3b3" stroke-width="1.600"><path d="M2 8h11M8 2.600 13.400 8 8 13.400" /></svg>
          <svg class="nav-ico" width="16" height="16" viewBox="0 0 16 16" fill="none" stroke="#3c3c3c" stroke-width="1.600"><path d="M13.200 5.500A5.600 5.600 0 1 0 13.600 9M13.500 1.500V6H9" /></svg>
          <div class="omnibox">
            <span class="tune"><svg width="14" height="14" viewBox="0 0 14 14" fill="none" stroke="#1f1f1f" stroke-width="1.500"><circle cx="3.200" cy="3.500" r="1.900" /><path d="M7.500 3.500h6M.5 10.500h6" /><circle cx="10.800" cy="10.500" r="1.900" /></svg></span>
            <span class="url"><b>github.com</b>/thakurg3/waph-thakurg3.github.io/tree/main</span>
            <svg class="install" width="18" height="18" viewBox="0 0 18 18" fill="none" stroke="#444" stroke-width="1.600"><path d="M9.500 2.500H2v11h14.500V11M6 15.800h6M13.500 1.500V9M10.500 6.300l3 3 3-3" /></svg>
            <svg class="bookmark" width="17" height="17" viewBox="0 0 17 17" fill="none" stroke="#3c3c3c" stroke-width="1.500"><path d="m8.500 1.800 2 4.600 5 .5-3.800 3.300 1.200 4.900-4.400-2.600-4.400 2.600 1.200-4.900L1.500 6.900l5-.5Z" /></svg>
          </div>
          <svg class="lens" width="18" height="18" viewBox="0 0 18 18" fill="none" stroke="#3c3c3c" stroke-width="1.700"><path d="M7 15.500H2.500q-1 0-1-1v-11q0-1 1-1h13q1 0 1 1V7" /><path d="M8 3h8.500v4H8Z" fill="#3c3c3c" stroke="none" /><circle cx="12.300" cy="11.500" r="3" /><path d="m14.500 14 3 3" /></svg>
          <i class="vr" />
          <svg class="profile" width="18" height="18" viewBox="0 0 18 18" fill="none" stroke="#3f5ea8" stroke-width="1.500"><circle cx="9" cy="9" r="7.700" /><circle cx="9" cy="7" r="2.500" /><path d="M3.800 14q5-3.600 10.400 0" /></svg>
          <svg class="dots" width="4" height="16" viewBox="0 0 4 16" fill="#3c3c3c"><circle cx="2" cy="2.500" r="1.600" /><circle cx="2" cy="8" r="1.600" /><circle cx="2" cy="13.500" r="1.600" /></svg>
        </div>

        <div class="viewport">
          <div class="page">
            <div class="gh-head">
              <div class="gh-top">
                <span class="sq"><Icon name="bars" /></span>
                <Icon name="github" :size="30" class="logo" />
                <span class="owner">thakurg3</span><span class="slash">/</span><strong class="repo">waph-thakurg3.github.io</strong>
                <div class="search"><Icon name="search" /><span>Type</span><kbd>/</kbd><span>to search</span></div>
                <div class="split"><span><Icon name="copilot" /></span><span><Icon name="down" /></span></div>
                <i class="bar" />
                <div class="sq plus"><Icon name="plus" /><Icon name="down" /></div>
                <span class="sq"><Icon name="issue" /></span>
                <span class="sq"><Icon name="pull" /></span>
                <span class="sq"><Icon name="inbox" /></span>
                <Identicon kind="green" color="#82e09b" :size="34" class="me" />
              </div>
              <nav class="gh-nav">
                <a v-for="n in nav" :key="n.label" :class="{ on: n.active }"><Icon :name="n.icon" /><span>{{ n.label }}</span></a>
              </nav>
            </div>

            <main class="repo-main">
              <div class="title-row">
                <Identicon kind="green" color="#82e09b" :size="26" class="title-av" />
                <h1>waph-thakurg3.github.io</h1>
                <span class="public">Public</span>
                <div class="actions">
                  <span class="btn pin"><Icon name="pin" />Pin</span>
                  <span class="btn watch"><Icon name="eye" />Watch<em>0</em><Icon name="down" /></span>
                  <span class="pair"><span class="left dim"><Icon name="fork" />Fork<em>0</em></span><span class="right"><Icon name="down" /></span></span>
                  <span class="pair"><span class="left"><Icon name="star" />Star<em>0</em></span><span class="right"><Icon name="down" /></span></span>
                </div>
              </div>

              <div class="cols">
                <div class="left-col">
                  <div class="filebar">
                    <span class="bbtn branch"><Icon name="branch" />main<Icon name="down" /></span>
                    <span class="stat"><Icon name="branch" /><b>1</b> Branch</span>
                    <span class="stat tags"><Icon name="tag" /><b>0</b> Tags</span>
                    <span class="goto"><Icon name="search" />Go to file<kbd>t</kbd></span>
                    <span class="bbtn add">Add file<Icon name="down" /></span>
                    <span class="bbtn green"><Icon name="code" />Code<Icon name="down" /></span>
                  </div>

                  <div class="box files">
                    <div class="commit">
                      <Identicon kind="red" color="#cf5968" :size="22" />
                      <strong>phuphung</strong>
                      <span class="cm">Final version with improved design and Flag Counter</span>
                      <Icon name="check" class="ok" />
                      <span class="sha">72dc05a · 22 minutes ago</span>
                      <Icon name="history" />
                      <span class="count">5 Commits</span>
                    </div>
                    <div v-for="f in files" :key="f.name" class="row">
                      <Icon :name="f.icon" :class="f.icon" />
                      <span class="name">{{ f.name }}</span><span class="msg">{{ f.msg }}</span><span class="date">{{ f.date }}</span>
                    </div>
                  </div>

                  <div class="box readme">
                    <div class="readme-head">
                      <span class="rtab"><Icon name="book" />README</span>
                      <Icon name="pencil" />
                    </div>
                    <h2>waph-thakurg3.github.io</h2>
                  </div>
                </div>

                <div class="side">
                  <div class="about"><h3>About</h3><Icon name="gear" /></div>
                  <p class="desc">No description, website, or topics provided.</p>
                  <div v-for="f in facts" :key="f.label" class="fact"><Icon :name="f.icon" /><span><b v-if="f.count">{{ f.count }}</b>{{ f.label }}</span></div>
                  <section class="block">
                    <h3>Releases</h3>
                    <p>No releases published</p>
                    <a>Create a new release</a>
                  </section>
                  <section class="block">
                    <h3>Packages</h3>
                    <p>No packages published</p>
                    <a>Publish your first package</a>
                  </section>
                  <section class="block">
                    <h3>Contributors <em>2</em></h3>
                  </section>
                </div>
              </div>
            </main>
          </div>
          <div class="scroll">
            <svg width="10" height="6" viewBox="0 0 10 6"><path d="M0 6 5 0l5 6Z" fill="#858585" /></svg>
            <i />
            <svg width="10" height="6" viewBox="0 0 10 6"><path d="M0 0h10L5 6Z" fill="#858585" /></svg>
          </div>
        </div>
      </section>
    </div>

    <svg class="cursor" width="14" height="22" viewBox="0 0 14 22"><path d="M1 1v16l3.800-3.500L7.500 19.500l2.600-1.200L7.500 12.500h5Z" fill="#2b2b2b" stroke="#fff" stroke-width="1" /></svg>
  </div>
</template>

<style>
html, body { background: #fff; overflow: hidden; }
</style>

<style scoped>
.desktop { position: relative; width: 1707px; height: 820px; overflow: hidden; display: flex; flex-direction: column; font-family: "Noto Sans", sans-serif; font-size: 14px; color: #1f2328; }
.desktop * { box-sizing: border-box; }
svg { display: block; flex: none; }
b, strong { font-weight: 700; }
em { font-style: normal; }
h1, h2, h3, p { margin: 0; }

.topbar { height: 27px; flex: none; background: #131313; color: #f2f2f2; display: flex; align-items: center; padding: 0 18px; line-height: 27px; }
.activities { width: 99px; letter-spacing: .4px; }
.app-name { margin-left: 6px; width: 707px; }
.bell { margin-left: 18px; }
.tray { margin-left: auto; display: flex; gap: 12px; }

.body { flex: 1; display: flex; min-height: 0; }
.dock { width: 70px; flex: none; background: linear-gradient(160deg, #1b0f16 60%, #25131e); display: flex; flex-direction: column; align-items: center; gap: 4px; padding-top: 6px; }
.app { position: relative; width: 64px; height: 64px; flex: none; display: flex; align-items: center; justify-content: center; border-radius: 10px; }
.current { background: #483e44; }
.lift { margin-top: -6px; }
.dot { position: absolute; left: 0; width: 6px; height: 6px; border-radius: 50%; background: #e95420; }
.dot.one { top: 24px; }
.dot.two { top: 33px; }
.dot.mid { top: 29px; }
.help { width: 44px; height: 44px; border-radius: 50%; background: linear-gradient(#1f85da 55%, #3a9ee4 55%); color: #fff; font-size: 34px; line-height: 44px; text-align: center; }
.terminal { width: 44px; height: 37px; border-radius: 4px; background: #4d4d4d; border: 1px solid #666; color: #fff; font: bold 11px/14px "DejaVu Sans Mono", monospace; padding: 2px 5px; }
.sep { width: 48px; height: 1px; background: #dcdadb; margin: -1px 0; flex: none; }
.grid9 { margin: auto 0 23px; display: grid; grid-template-columns: repeat(3, 6px); gap: 6px; }
.grid9 i { width: 6px; height: 6px; border-radius: 1px; background: #f2f2f2; }

.browser { flex: 1; min-width: 0; display: flex; flex-direction: column; background: #fafafa; }
.tabs { height: 40px; flex: none; background: #eaeaea; border-bottom: 1px solid #b0b0b0; display: flex; align-items: center; color: #333; }
.tab { position: relative; display: flex; align-items: center; width: 250px; height: 39px; padding-left: 20px; }
.tab > * { position: relative; }
.tab-title { margin-left: 8px; width: 168px; overflow: hidden; white-space: nowrap; -webkit-mask-image: linear-gradient(90deg, #000 82%, transparent); mask-image: linear-gradient(90deg, #000 82%, transparent); }
.wide { letter-spacing: .16px; }
.x { margin-left: 12px; }
.tab.active { width: 234px; padding-left: 8px; }
.tab > .shape { position: absolute; left: -12px; top: 6px; }
.gh { color: #24292f; }
.new { margin-left: 12px; }
.win { margin-left: auto; display: flex; align-items: center; gap: 26px; padding-right: 10px; }

.toolbar { height: 47px; flex: none; display: flex; align-items: center; padding: 0 0 1px 14px; }
.nav-ico { margin-right: 20px; }
.omnibox { width: 1379px; height: 34px; margin-left: -2px; background: #fff; border-radius: 17px; display: flex; align-items: center; padding: 0 16px 0 5px; }
.tune { width: 24px; height: 24px; border-radius: 50%; background: #fafafa; display: flex; align-items: center; justify-content: center; }
.url { margin-left: 8px; color: #6f6f6f; font-size: 13.35px; }
.url b { color: #1a1a1a; font-weight: 400; }
.install { margin-left: auto; }
.bookmark { margin-left: 15px; }
.lens { margin-left: 17px; }
.vr { width: 2px; height: 16px; background: #e2e2e2; margin-left: 17px; }
.profile { margin-left: 17px; }
.dots { margin-left: 25px; }

.viewport { flex: 1; display: flex; min-height: 0; background: #fff; }
.page { width: 1622px; flex: none; overflow: hidden; }
.scroll { width: 15px; background: #fcfcfc; display: flex; flex-direction: column; align-items: center; padding: 6px 0; }
.scroll i { width: 9px; height: 402px; background: #8b8b8b; border-radius: 5px; margin: 6px 0 auto; }

.gh-head { height: 104px; background: #f6f8fa; border-bottom: 1px solid #d1d9e0; padding: 16px 16px 0; }
.gh-top { display: flex; align-items: center; height: 32px; color: #59636e; }
.sq { width: 32px; height: 32px; border: 1px solid #d1d9e0; border-radius: 6px; display: flex; align-items: center; justify-content: center; flex: none; }
.sq + .sq { margin-left: 8px; }
.logo { margin-left: 13px; color: #1f2328; }
.owner { margin-left: 15px; color: #1f2328; padding-bottom: 1px; }
.slash { margin: 0 12px 0 11px; padding-bottom: 1px; }
.repo { color: #1f2328; padding-bottom: 1px; }
.search { margin-left: auto; width: 260px; height: 32px; border: 1px solid #d1d9e0; border-radius: 6px; display: flex; align-items: center; padding: 0 0 1px 7px; gap: 4px; }
.search .icon { margin-right: 4px; }
.search kbd { font: 12px/14px "Noto Sans", sans-serif; width: 16px; height: 18px; border: 1px solid #59636e; border-radius: 3px; text-align: center; margin-top: 3px; }
.split { margin-left: 8px; display: flex; height: 32px; border: 1px solid #d1d9e0; border-radius: 6px; }
.split span { width: 32px; display: flex; align-items: center; justify-content: center; }
.split span + span { width: 22px; border-left: 1px solid #d1d9e0; }
.bar { width: 1px; height: 20px; background: #d1d9e0; margin: 0 12px; }
.plus { width: 58px; gap: 8px; }
.me { margin: 0 0 0 8px; }
.gh-nav { display: flex; gap: 8px; margin-top: 8px; height: 48px; }
.gh-nav a { display: flex; align-items: center; gap: 10px; padding: 1px 9px 0; height: 47px; border-bottom: 2px solid transparent; }
.gh-nav a:nth-child(-n+2) { gap: 8px; }
.gh-nav a:nth-child(4) { margin-left: 1px; }
.gh-nav .icon { color: #59636e; }
.gh-nav .on { width: 74px; padding: 1px 8px 0; border-bottom-color: #fd8c73; font-weight: 700; }
.gh-nav .on + a { padding-left: 9.6px; }

.repo-main { width: 1216px; margin-left: 203px; }
.title-row { height: 63px; border-bottom: 1px solid #d1d9e0; display: flex; align-items: flex-start; padding-top: 16px; }
.title-av { margin: 2px 0 0 -1px; }
h1 { font-size: 20px; line-height: 30px; font-weight: 700; margin-left: 7px; letter-spacing: .05px; }
.public { margin: 5px 0 0 8px; height: 20px; border: 1px solid #d1d9e0; border-radius: 10px; padding: 0 7px; font-size: 12px; line-height: 18px; color: #59636e; }
.actions { margin-left: auto; display: flex; gap: 8px; font-size: 12px; }
.actions .icon { color: #59636e; }
.btn, .left, .right { height: 28px; display: flex; align-items: center; background: #f6f8fa; border: 1px solid #d1d9e0; border-radius: 6px; padding-bottom: 1px; }
.pin { width: 67px; padding-left: 12px; gap: 7px; }
.watch { width: 118px; padding-left: 8px; gap: 4px; }
.watch em { margin: 0 0 0 5px; }
.actions em { min-width: 20px; height: 20px; border-radius: 10px; background: #e8ebee; text-align: center; line-height: 19px; }
.pair { display: flex; }
.left { width: 101px; border-radius: 6px 0 0 6px; border-right: 0; padding-left: 12px; gap: 8px; }
.left .icon { margin-right: 3px; }
.left em { margin-left: -2px; }
.right { width: 34px; border-radius: 0 6px 6px 0; justify-content: center; }
.dim { width: 100px; color: #818b98; background: #eff2f5; }
.dim .icon { color: #818b98; margin-right: 2px; }
.left.dim em { margin-left: -4px; }

.cols { display: flex; justify-content: space-between; padding-top: 24px; }
.left-col { width: 896px; }
.filebar { display: flex; height: 32px; align-items: center; }
.filebar .icon { color: #59636e; }
.bbtn { height: 32px; border: 1px solid #d1d9e0; border-radius: 6px; background: #f6f8fa; display: flex; align-items: center; padding-bottom: 1px; box-shadow: 0 1px 0 rgba(31, 35, 40, .04); }
.branch { width: 107px; padding-left: 12px; gap: 8px; }
.stat { color: #59636e; display: flex; align-items: center; margin-left: 13px; padding-bottom: 1px; white-space: pre; }
.stat b { color: #1f2328; margin-left: 8px; }
.tags { margin-left: 10px; }
.goto { margin-left: auto; width: 270px; height: 32px; border: 1px solid #d1d9e0; border-radius: 6px; display: flex; align-items: center; padding: 0 6px 1px 12px; gap: 8px; color: #59636e; }
.goto kbd { margin-left: auto; width: 16px; height: 19px; background: #f6f8fa; border: 1px solid #d1d9e0; border-bottom-width: 2px; border-radius: 5px; font: 11px/15px "DejaVu Sans Mono", monospace; color: #1f2328; text-align: center; }
.add { margin-left: 8px; width: 96px; padding-left: 12px; gap: 8px; }
.green { margin-left: 8px; width: 108px; padding-left: 12px; gap: 8px; background: #1f883d; border-color: #1a7f37; color: #fff; }
.filebar .green .icon { color: #fff; }

.box { border: 1px solid #d1d9e0; border-radius: 6px; overflow: hidden; }
.files { margin-top: 16px; }
.commit { height: 52px; background: #f6f8fa; display: flex; align-items: center; padding: 0 21px 0 12px; color: #59636e; }
.commit strong { color: #1f2328; margin-left: 7px; width: 72px; }
.cm { margin-left: 8px; }
.ok { color: #1a7f37; margin-left: 14px; }
.sha { margin: 0 17px 0 auto; padding-bottom: 2px; font-size: 12px; }
.count { font-size: 12px; color: #1f2328; margin-left: 4px; padding-bottom: 2px; }
.row { height: 41px; border-top: 1px solid #d1d9e0; display: flex; align-items: center; padding: 0 16px; color: #59636e; }
.folder { color: #54aeff; }
.name { width: 332px; margin-left: 10px; color: #1f2328; }
.date { margin-left: auto; }
.readme { margin-top: 16px; height: 181px; }
.readme-head { height: 48px; border-bottom: 1px solid #d1d9e0; display: flex; align-items: center; padding: 0 22px 0 8px; justify-content: space-between; color: #59636e; }
.rtab { height: 48px; padding: 0 8px; margin-bottom: -1px; width: 98px; display: flex; align-items: center; gap: 8px; border-bottom: 2px solid #fd8c73; color: #1f2328; font-weight: 700; }
.rtab .icon { color: #59636e; }
h2 { margin: 32px 32px 0; padding-bottom: 10px; font-size: 32px; line-height: 40px; font-weight: 700; letter-spacing: .1px; border-bottom: 1px solid #dfe4e9; }

.side { width: 296px; }
.about { display: flex; justify-content: space-between; align-items: center; height: 32px; color: #59636e; }
h3 { font-size: 16px; line-height: 24px; font-weight: 700; color: #1f2328; }
.desc { font-size: 16px; line-height: 24px; font-style: italic; color: #59636e; margin: 12px 0 11px; }
.fact { height: 29px; display: flex; align-items: center; gap: 12px; color: #59636e; white-space: pre; padding-top: 1px; }
.block { border-top: 1px solid #d1d9e0; margin-top: 0; height: 109px; padding-top: 16px; }
.fact + .block { margin-top: 13px; }
.block p { font-size: 12px; line-height: 17px; color: #59636e; margin-top: 16px; }
.block a { display: block; width: fit-content; font-size: 12px; line-height: 16px; padding-top: 1px; color: #0969da; border-bottom: 1px solid #0969da; }
.block em { display: inline-block; min-width: 20px; height: 20px; border-radius: 10px; background: #ebedf0; font-size: 12px; font-weight: 400; line-height: 20px; text-align: center; vertical-align: 1px; }

.cursor { position: absolute; left: 523px; top: 353px; }
</style>
